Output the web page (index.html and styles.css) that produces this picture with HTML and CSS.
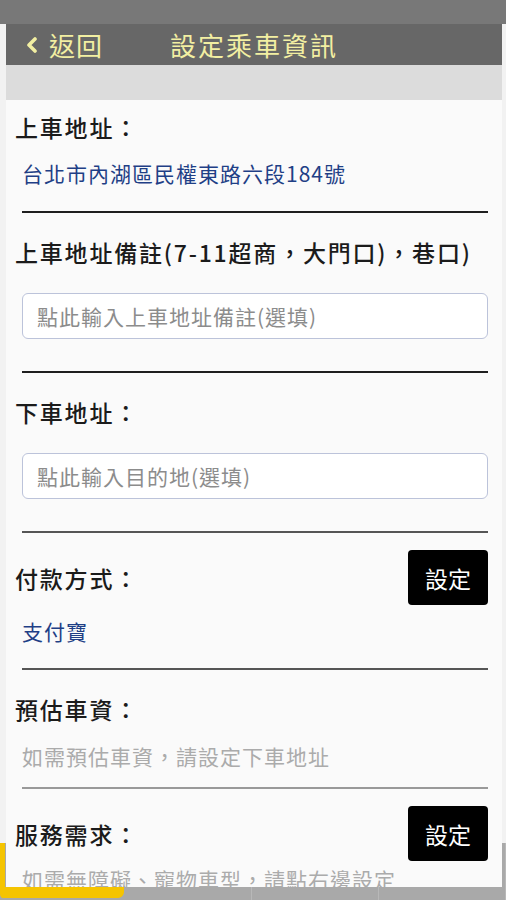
FILE: index.html
```html
<!DOCTYPE html>
<html lang="zh-Hant">
<head>
    <meta charset="UTF-8">
    <meta name="viewport" content="width=device-width, initial-scale=1.0">
    <title>設定乘車資訊</title>
    <link rel="stylesheet" href="styles.css">
</head>
<body>
    <!-- Page behind the dialog -->
    <div class="page">
        <div class="status-bar"></div>
        <div class="page-main"></div>
        <div class="tab-bar">
            <div class="tab active"></div>
            <div class="tab"></div>
            <div class="tab"></div>
            <div class="tab"></div>
        </div>
    </div>

    <!-- Dialog -->
    <div class="dialog">
        <div class="dialog-header">
            <div class="back">
                <svg class="back-icon" width="12" height="16" viewBox="0 0 12 16">
                    <polyline points="9,2 3,8 9,14" fill="none" stroke="#f2efa2" stroke-width="3.6" stroke-linecap="round" stroke-linejoin="round"/>
                </svg>
                <span>返回</span>
            </div>
            <div class="title">設定乘車資訊</div>
        </div>
        <div class="dialog-band"></div>

        <div class="dialog-body">
            <div class="section first">
                <div class="label">上車地址：</div>
                <div class="value">台北市內湖區民權東路六段184號</div>
            </div>
            <hr class="divider">

            <div class="section">
                <div class="label">上車地址備註(7-11超商，大門口)，巷口)</div>
                <input class="field" type="text" placeholder="點此輸入上車地址備註(選填)">
            </div>
            <hr class="divider">

            <div class="section">
                <div class="label">下車地址：</div>
                <input class="field" type="text" placeholder="點此輸入目的地(選填)">
            </div>
            <hr class="divider gray">

            <div class="section row-section">
                <div class="row">
                    <div class="label">付款方式：</div>
                    <button class="set-btn">設定</button>
                </div>
                <div class="value pay">支付寶</div>
            </div>
            <hr class="divider gray">

            <div class="section">
                <div class="label">預估車資：</div>
                <div class="hint">如需預估車資，請設定下車地址</div>
            </div>
            <hr class="divider light">

            <div class="section row-section">
                <div class="row">
                    <div class="label">服務需求：</div>
                    <button class="set-btn">設定</button>
                </div>
                <div class="hint tight">如需無障礙、寵物車型，請點右邊設定</div>
            </div>
        </div>
    </div>
</body>
</html>
```

FILE: styles.css
```css
body {
    margin: 0;
    width: 506px;
    height: 900px;
    overflow: hidden;
    position: relative;
    font-family: "Noto Sans CJK TC", "Noto Sans", sans-serif;
}

/* background page */
.page {
    display: flex;
    flex-direction: column;
    height: 900px;
    background-color: #eeeeee;
}

.status-bar {
    height: 24px;
    background-color: #787878;
}

.page-main {
    flex: 1;
    background-color: #f2f2f2;
}

.tab-bar {
    display: flex;
    height: 57px;
    background-color: #a9a9a9;
}

.tab {
    width: 127px;
    border-right: 1px solid #b8b8b8;
}

.tab.active {
    width: 120px;
    border-left: 5px solid #f5c400;
    border-bottom: 11px solid #f5c400;
    border-right: none;
    border-radius: 0 0 6px 4px;
    margin-bottom: 2px;
}

/* dialog */
.dialog {
    position: absolute;
    top: 24px;
    left: 6px;
    width: 496px;
    height: 863px;
    display: flex;
    flex-direction: column;
    overflow: hidden;
    background-color: #fafafa;
}

.dialog-header {
    flex-shrink: 0;
    display: flex;
    align-items: center;
    height: 41px;
    background-color: #676767;
    color: #f2efa2;
    font-size: 26px;
    letter-spacing: 1px;
}

.back {
    display: flex;
    align-items: center;
    padding-left: 20px;
    width: 144px;
}

.back-icon {
    margin-right: 11px;
}

.title {
    letter-spacing: 2px;
}

.dialog-band {
    flex-shrink: 0;
    height: 35px;
    background-color: #dcdcdc;
}

.dialog-body {
    flex-shrink: 0;
    padding: 0 14px 0 9px;
}

.section {
    padding-top: 24px;
    padding-bottom: 0;
}

.section.first {
    padding-top: 12px;
}

.label {
    font-size: 23px;
    font-weight: 500;
    line-height: 30px;
    color: #1b1b1b;
    letter-spacing: 1.8px;
}

.value {
    margin-top: 16px;
    padding-left: 7px;
    font-size: 21px;
    line-height: 30px;
    color: #1f3f86;
    letter-spacing: 1px;
    margin-bottom: 23px;
}

.value.pay {
    margin-top: 11px;
    margin-bottom: 22px;
}

.field {
    display: block;
    box-sizing: border-box;
    width: 466px;
    height: 46px;
    margin: 26px 0 32px 7px;
    padding: 0 14px;
    border: 1.5px solid #bcc3da;
    border-radius: 6px;
    background-color: #ffffff;
    font-family: inherit;
    font-size: 21px;
    letter-spacing: 1px;
    color: #333;
}

.field::placeholder {
    color: #8c8c8c;
}

.divider {
    margin: 0 0 0 7px;
    width: 466px;
    border: none;
    height: 2px;
    background-color: #1e1e1e;
}

.divider.gray {
    background-color: #555555;
}

.divider.light {
    background-color: #999999;
}

.row-section {
    padding-top: 17px;
}

.row {
    display: flex;
    justify-content: space-between;
    align-items: center;
}

.set-btn {
    width: 80px;
    height: 55px;
    border: none;
    border-radius: 4px;
    background-color: #000000;
    color: #ffffff;
    font-family: inherit;
    font-size: 23px;
    padding: 0;
    margin-right: 0;
}

.hint {
    margin-top: 17px;
    margin-bottom: 16px;
    padding-left: 7px;
    font-size: 21px;
    line-height: 30px;
    letter-spacing: 1px;
    color: #ababab;
}

.hint.tight {
    margin-top: 3px;
}
```
